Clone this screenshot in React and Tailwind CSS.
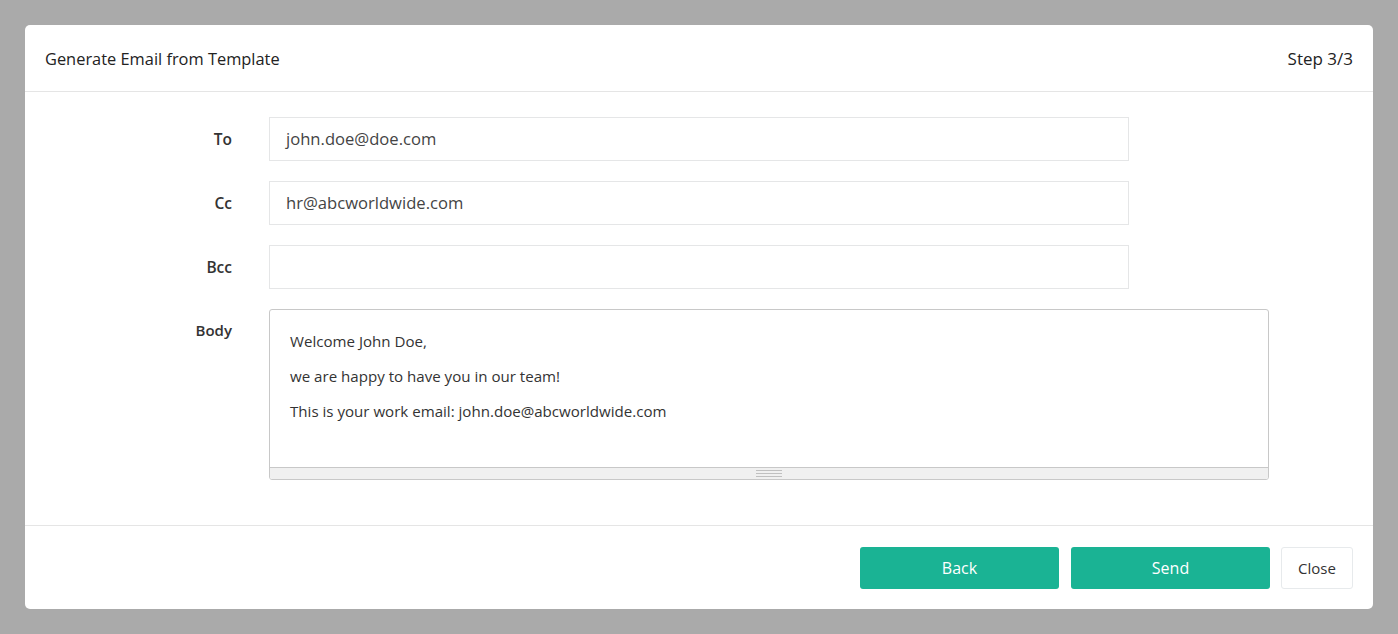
const fields = [
  { label: "To", value: "john.doe@doe.com" },
  { label: "Cc", value: "hr@abcworldwide.com" },
  { label: "Bcc", value: "" },
];

const bodyLines = [
  "Welcome John Doe,",
  "we are happy to have you in our team!",
  "This is your work email: john.doe@abcworldwide.com",
];

export default function App() {
  return (
    <div
      className="min-h-screen bg-[#aaaaaa] p-[25px] text-[#333333]"
      style={{ fontFamily: '"Open Sans", "Noto Sans", sans-serif' }}
    >
      <div className="rounded-[5px] bg-white">
        {/* header */}
        <div className="flex h-[67px] items-center justify-between border-b border-[#e5e5e5] px-5 pt-[2px]">
          <h1 className="text-[16.4px] text-[#222222]">Generate Email from Template</h1>
          <span className="text-[17px] text-[#222222]">Step 3/3</span>
        </div>

        {/* form */}
        <div className="flex flex-col gap-5 pt-[25px] pb-[45px]">
          {fields.map((field) => (
            <div key={field.label} className="flex items-center">
              <label className="w-[207px] pt-[2px] text-right text-[15.5px] font-semibold text-[#333333]">
                {field.label}
              </label>
              <div className="ml-[37px] flex h-[44px] w-[860px] items-center border border-[#e5e6e7] px-4 pt-px text-[16.6px] text-[#444444]">
                {field.value}
              </div>
            </div>
          ))}

          <div className="flex items-start">
            <label className="w-[207px] pt-[10px] text-right text-[15px] font-semibold text-[#333333]">
              Body
            </label>
            <div className="ml-[37px] flex h-[171px] w-[1000px] flex-col overflow-hidden rounded-[3px] border border-[#c8c8c8]">
              <div className="flex flex-1 flex-col gap-[13px] px-5 pt-[20px] text-[15.1px] text-[#333333]">
                {bodyLines.map((line) => (
                  <p key={line} className="leading-[22px]">
                    {line}
                  </p>
                ))}
              </div>
              <div className="flex h-[12px] items-center justify-center border-t border-[#c8c8c8] bg-[#f0f0f0]">
                <div className="flex w-[26px] flex-col gap-[2px]">
                  <div className="h-px bg-[#c0c0c0]" />
                  <div className="h-px bg-[#c0c0c0]" />
                  <div className="h-px bg-[#c0c0c0]" />
                </div>
              </div>
            </div>
          </div>
        </div>

        {/* footer */}
        <div className="flex items-center justify-end border-t border-[#e5e5e5] px-5 pt-[21px] pb-[20px]">
          <button className="h-[42px] w-[199px] rounded-[3px] bg-[#1ab394] text-[16px] text-white">
            Back
          </button>
          <button className="ml-[12px] h-[42px] w-[199px] rounded-[3px] bg-[#1ab394] text-[16px] text-white">
            Send
          </button>
          <button className="ml-[11px] h-[42px] w-[72px] rounded-[3px] border border-[#e7eaec] bg-white text-[15px] text-[#333333]">
            Close
          </button>
        </div>
      </div>
    </div>
  );
}
